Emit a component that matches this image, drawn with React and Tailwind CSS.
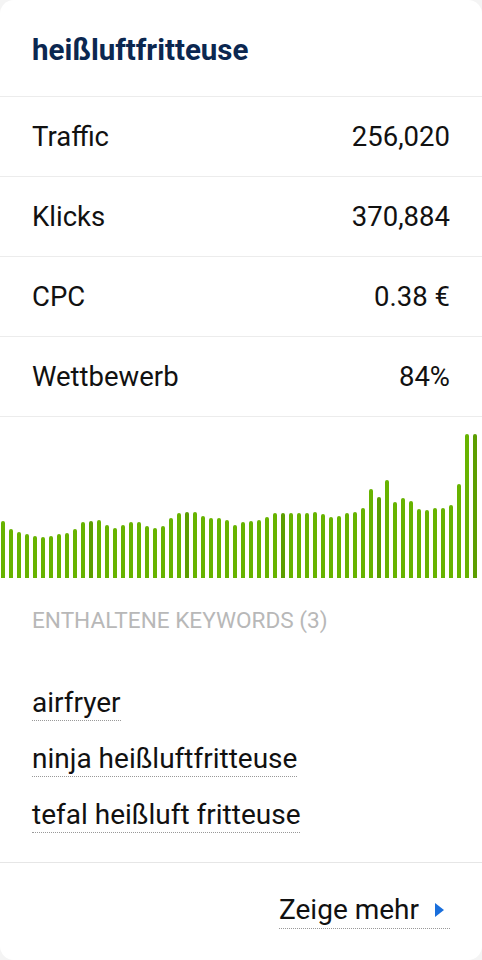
import React from 'react';

const stats = [
  { label: 'Traffic', value: '256,020' },
  { label: 'Klicks', value: '370,884' },
  { label: 'CPC', value: '0.38 €' },
  { label: 'Wettbewerb', value: '84%' },
];

const bars = [
  57, 49, 46, 44, 42, 41, 42, 44, 45, 49, 56, 57, 58, 53, 50, 53, 56, 56, 52, 50,
  52, 60, 65, 66, 66, 62, 60, 60, 58, 53, 56, 57, 58, 61, 65, 65, 65, 65, 65, 66,
  64, 61, 62, 65, 66, 70, 89, 81, 98, 76, 80, 77, 69, 68, 70, 70, 73, 94, 144, 144,
];

const keywords = ['airfryer', 'ninja heißluftfritteuse', 'tefal heißluft fritteuse'];

export default function App() {
  return (
    <div className="min-h-screen w-[482px] bg-[#f4f4f4]" style={{ fontFamily: 'Roboto, "Liberation Sans", sans-serif' }}>
      <div className="h-[960px] bg-white rounded-[14px] flex flex-col overflow-hidden">
        <div className="h-[97px] flex items-center px-8 border-b border-[#ececec]">
          <h1 className="text-[29.5px] font-bold text-[#0b2750] leading-none pt-[5px]">heißluftfritteuse</h1>
        </div>

        {stats.map((s) => (
          <div key={s.label} className="h-[80px] flex items-center justify-between px-8 border-b border-[#ececec] text-[27.5px] text-[#111]">
            <span>{s.label}</span>
            <span>{s.value}</span>
          </div>
        ))}

        <div className="h-[162px] flex items-end gap-[4px] pl-[1px] pb-[1px]">
          {bars.map((h, i) => (
            <div
              key={i}
              className={`w-[4px] rounded-t-[2px] shrink-0 ${(i + 1) % 12 === 0 ? 'bg-[#5c9e00]' : 'bg-[#67b300]'}`}
              style={{ height: h }}
            />
          ))}
        </div>

        <div className="px-8 pt-[26px] flex-1">
          <div className="text-[22.6px] text-[#b8b8b8] uppercase leading-[32px]">Enthaltene Keywords (3)</div>
          <div className="mt-[49px] flex flex-col gap-[21px] items-start">
            {keywords.map((k) => (
              <span key={k} className="text-[28px] text-[#111] leading-[34px] border-b border-dotted border-[#999]">{k}</span>
            ))}
          </div>
        </div>

        <div className="h-[98px] border-t border-[#e6e6e6] flex items-center justify-end px-8">
          <a className="flex items-center gap-[16px] text-[28px] text-[#111] leading-[36px] border-b border-dotted border-[#999] pr-[6px] mb-[2px]">
            <span>Zeige mehr</span>
            <span className="w-0 h-0 border-y-[7px] border-y-transparent border-l-[9px] border-l-[#1a6fdc]" />
          </a>
        </div>
      </div>
    </div>
  );
}
